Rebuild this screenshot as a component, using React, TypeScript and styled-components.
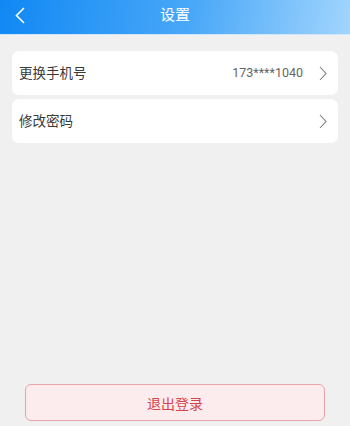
import React from "react";
import styled, { createGlobalStyle } from "styled-components";

const GlobalStyle = createGlobalStyle`
  html, body {
    margin: 0;
    padding: 0;
    background: #f0f0f0;
    font-family: "Noto Sans CJK SC", "Noto Sans", sans-serif;
  }
  * { box-sizing: border-box; }
`;

const Page = styled.div`
  width: 350px;
  height: 426px;
  display: flex;
  flex-direction: column;
  background: #f0f0f0;
  overflow: hidden;
`;

const Header = styled.div`
  height: 35px;
  flex-shrink: 0;
  position: relative;
  display: flex;
  align-items: center;
  justify-content: center;
  background: linear-gradient(100deg, #1088f4 0%, #4aa8f8 55%, #a2d5fd 100%);
  border-bottom: 1px solid #cfe6fb;
`;

const BackButton = styled.div`
  position: absolute;
  left: 10px;
  top: 3px;
  width: 20px;
  height: 24px;
  display: flex;
  align-items: center;
  justify-content: center;
`;

const Title = styled.div`
  color: #ffffff;
  font-size: 15px;
  line-height: 1;
  margin-top: -7px;
`;

const List = styled.div`
  display: flex;
  flex-direction: column;
  gap: 4px;
  padding: 16px 12px 0 12px;
`;

const Row = styled.div`
  height: 44px;
  background: #ffffff;
  border-radius: 7px;
  display: flex;
  align-items: center;
  padding: 0 11px 0 7px;
`;

const Label = styled.div`
  flex: 1;
  font-size: 13.5px;
  color: #3a3a3a;
  margin-top: -2px;
`;

const Value = styled.div`
  font-family: "Roboto", "Noto Sans", sans-serif;
  font-size: 12.5px;
  color: #666666;
  margin-right: 16px;
  margin-top: -2px;
`;

const Spacer = styled.div`
  flex: 1;
`;

const Footer = styled.div`
  padding: 0 25px 5px 25px;
`;

const LogoutButton = styled.div`
  height: 37px;
  border: 1px solid #e9a3a8;
  border-radius: 6px;
  background: #fdeced;
  color: #d5434c;
  font-size: 14px;
  display: flex;
  align-items: center;
  justify-content: center;
`;

const Chevron = ({ color }: { color: string }) => (
  <svg width="8" height="15" viewBox="0 0 8 15" fill="none">
    <path d="M1 1 L7 7.5 L1 14" stroke={color} strokeWidth="1.1" />
  </svg>
);

const BackIcon = () => (
  <svg width="10" height="17" viewBox="0 0 10 17" fill="none">
    <path d="M9 1 L1.5 8.5 L9 16" stroke="#ffffff" strokeWidth="1.6" />
  </svg>
);

export default function App() {
  return (
    <>
      <GlobalStyle />
      <Page>
        <Header>
          <BackButton>
            <BackIcon />
          </BackButton>
          <Title>设置</Title>
        </Header>
        <List>
          <Row>
            <Label>更换手机号</Label>
            <Value>173****1040</Value>
            <Chevron color="#7a7a7a" />
          </Row>
          <Row>
            <Label>修改密码</Label>
            <Chevron color="#7a7a7a" />
          </Row>
        </List>
        <Spacer />
        <Footer>
          <LogoutButton>退出登录</LogoutButton>
        </Footer>
      </Page>
    </>
  );
}
